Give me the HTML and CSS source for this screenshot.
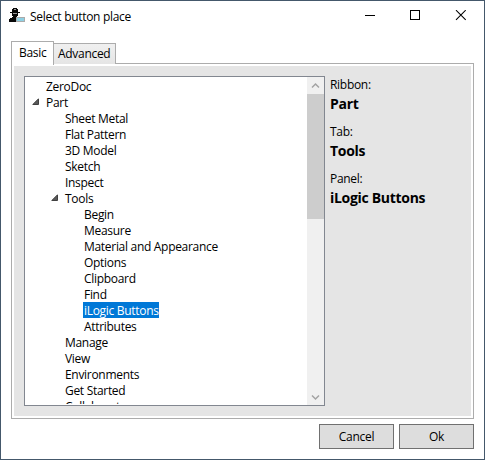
FILE: index.html
```
<!DOCTYPE html>
<html lang="en">
<head>
<meta charset="utf-8">
<title>Select button place</title>
<link rel="stylesheet" href="styles.css">
</head>
<body>
<div class="window">
  <header class="titlebar">
    <svg class="app-icon" width="16" height="15" viewBox="0 0 16 15" shape-rendering="crispEdges">
      <path fill="#080808" d="M4 0h4v1h1v3h2v1H9v3H8v1H7v5H0v-3h1v-1h2V9h1V8H3V5H1V4h2V1h1z"/>
      <path fill="#999" d="M4 5h4v1H4zM5 1h2v1H5z"/>
      <path fill="#8ed0e3" stroke="#aaa" d="M7.500 9.500h8v4h-8z"/>
    </svg>
    <h1 class="title">Select button place</h1>
    <svg class="controls" width="102" height="11" viewBox="0 0 102 11" fill="none" stroke="#000">
      <path d="M0 5.500h10M45.500.5h9v9h-9z" shape-rendering="crispEdges"/>
      <path d="M91 .2l9.700 9.700M100.700.2L91 9.900" stroke-width="1.100"/>
    </svg>
  </header>
  <nav class="tabs">
    <div class="tab active">Basic</div>
    <div class="tab">Advanced</div>
  </nav>
  <main class="panel">
    <div class="content">
      <div class="tree">
        <ul class="items">
          <li><span>ZeroDoc</span></li>
          <li><svg class="arrow" width="7" height="7"><path d="M6.500.8v5.700H.8z"/></svg><span>Part</span></li>
          <li class="l2"><span>Sheet Metal</span></li>
          <li class="l2"><span>Flat Pattern</span></li>
          <li class="l2"><span>3D Model</span></li>
          <li class="l2"><span>Sketch</span></li>
          <li class="l2"><span>Inspect</span></li>
          <li class="l2"><svg class="arrow" width="7" height="7"><path d="M6.500.8v5.700H.8z"/></svg><span>Tools</span></li>
          <li class="l3"><span>Begin</span></li>
          <li class="l3"><span>Measure</span></li>
          <li class="l3"><span>Material and Appearance</span></li>
          <li class="l3"><span>Options</span></li>
          <li class="l3"><span>Clipboard</span></li>
          <li class="l3"><span>Find</span></li>
          <li class="l3"><span class="selected">iLogic Buttons</span></li>
          <li class="l3"><span>Attributes</span></li>
          <li class="l2"><span>Manage</span></li>
          <li class="l2"><span>View</span></li>
          <li class="l2"><span>Environments</span></li>
          <li class="l2"><span>Get Started</span></li>
          <li class="l2"><span>Collaborate</span></li>
        </ul>
        <div class="scrollbar">
          <svg class="up" width="17" height="17"><path d="M5 10.500L8.500 7l3.500 3.500"/></svg>
          <div class="thumb"></div>
          <svg class="down" width="17" height="17"><path d="M5 7.500L8.500 11 12 7.500"/></svg>
        </div>
      </div>
      <dl class="details">
        <dt>Ribbon:</dt><dd>Part</dd>
        <dt>Tab:</dt><dd>Tools</dd>
        <dt>Panel:</dt><dd>iLogic Buttons</dd>
      </dl>
    </div>
  </main>
  <footer class="actions">
    <button>Cancel</button>
    <button>Ok</button>
  </footer>
</div>
</body>
</html>
```

FILE: styles.css
```
* { box-sizing: border-box; }
body, h1, ul, dl, dd { margin: 0; padding: 0; }
body, button {
  font: 12px/16px "Open Sans", "Noto Sans", sans-serif;
  letter-spacing: -0.3px;
  color: #000;
}
.window {
  width: 485px;
  height: 460px;
  border: 1px solid #44586b;
  background: #fff;
  overflow: hidden;
}
.titlebar {
  display: flex;
  height: 40px;
  padding: 7px 17px 0 8px;
}
.app-icon { flex: none; margin-right: 5px; }
.title { font-size: 12px; font-weight: 400; line-height: 18px; }
.controls { margin: 2px 0 0 auto; }
.tabs {
  display: flex;
  align-items: flex-end;
  height: 23px;
  padding-left: 10px;
}
.tab {
  height: 21px;
  padding: 2px 5px 0 4px;
  width: 62px;
  border: 1px solid #acacac;
  border-left: 0;
  border-bottom: 0;
  background: linear-gradient(#f0f0f0, #e5e5e5);
  white-space: nowrap;
}
.tab.active {
  position: relative;
  width: 43px;
  height: 24px;
  margin-bottom: -1px;
  padding: 3px 7px 0;
  border-left: 1px solid #acacac;
  background: #fff;
}
.panel {
  width: 463px;
  height: 356px;
  margin: -1px 0 0 10px;
  padding: 2px;
  border: 1px solid #acacac;
}
.content {
  display: flex;
  gap: 5px;
  height: 350px;
  padding: 10px;
  background: #e5e5e5;
}
.tree {
  display: flex;
  flex: none;
  width: 301px;
  height: 330px;
  border: 1px solid #828790;
  background: #fff;
}
.items {
  flex: 1;
  height: 327px;
  padding: 1px 0 0 20px;
  overflow: hidden;
  list-style: none;
}
.items li {
  position: relative;
  display: flex;
  height: 16px;
  white-space: nowrap;
}
.items span { padding: 0 1px; height: 16px; line-height: 18px; }
.items .l2 { padding-left: 19px; }
.items .l3 { padding-left: 38px; }
.items .selected { width: 76px; background: #0078d7; color: #fff; }
.arrow { position: absolute; left: -13px; top: 4px; }
.l2 .arrow { left: 6px; }
.arrow path { fill: #595959; stroke: #404040; }
.scrollbar { display: flex; flex-direction: column; width: 17px; background: #f0f0f0; }
.scrollbar path { fill: none; stroke: #a3a3a3; stroke-width: 1.5; }
.thumb { height: 125px; background: #cdcdcd; }
.down { margin-top: auto; }
.details dt { height: 16px; line-height: 18px; }
.details dd {
  height: 19px;
  margin: 2px 0 10px;
  font-size: 14px;
  line-height: 19px;
  font-weight: 700;
  white-space: nowrap;
}
.actions {
  display: flex;
  justify-content: flex-end;
  gap: 5px;
  padding: 5px 10px 0 0;
}
.actions button {
  width: 75px;
  height: 25px;
  padding: 0;
  border: 1px solid #707070;
  background: #ddd;
}
```
